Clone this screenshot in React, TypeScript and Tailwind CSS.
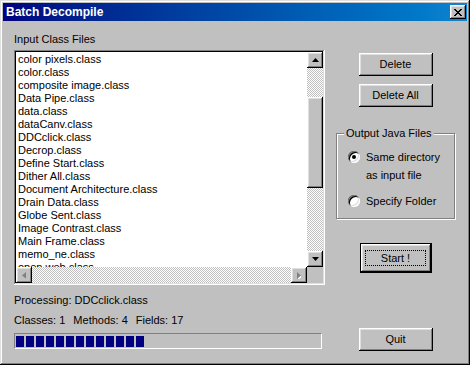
import React from 'react'

const files = [
  'color pixels.class',
  'color.class',
  'composite image.class',
  'Data Pipe.class',
  'data.class',
  'dataCanv.class',
  'DDCclick.class',
  'Decrop.class',
  'Define Start.class',
  'Dither All.class',
  'Document Architecture.class',
  'Drain Data.class',
  'Globe Sent.class',
  'Image Contrast.class',
  'Main Frame.class',
  'memo_ne.class',
  'open web.class',
]

// win98 bevels
const raised = 'shadow-[inset_-1px_-1px_#000,inset_1px_1px_#fff,inset_-2px_-2px_#808080,inset_2px_2px_#dfdfdf]'
const checker = 'bg-[image:conic-gradient(#c0c0c0_25%,#fff_0_50%,#c0c0c0_0_75%,#fff_0)] bg-[length:2px_2px]'

function Arrow({ dir, disabled }: { dir: 'up' | 'down' | 'left' | 'right'; disabled?: boolean }) {
  const fill = disabled ? '#808080' : '#000'
  const pts: Record<string, string> = {
    up: '3.5,0 7,4 0,4',
    down: '0,0 7,0 3.5,4',
    left: '4,0 4,7 0,3.5',
    right: '0,0 0,7 4,3.5',
  }
  const vertical = dir === 'up' || dir === 'down'
  return (
    <div className={`w-[16px] h-[16px] shrink-0 bg-[#c0c0c0] flex items-center justify-center ${raised}`}>
      <svg width={vertical ? 7 : 4} height={vertical ? 4 : 7} viewBox={vertical ? '0 0 7 4' : '0 0 4 7'}>
        {disabled && <polygon points={pts[dir]} fill="#fff" transform="translate(1,1)" />}
        <polygon points={pts[dir]} fill={fill} />
      </svg>
    </div>
  )
}

function Radio({ checked }: { checked?: boolean }) {
  return (
    <div className="w-[12px] h-[12px] shrink-0 rounded-full bg-white flex items-center justify-center shadow-[inset_1px_1px_#808080,inset_-1px_-1px_#fff,inset_2px_2px_#000,inset_-2px_-2px_#dfdfdf]">
      {checked && <div className="w-[4px] h-[4px] rounded-full bg-black" />}
    </div>
  )
}

function Button({ children, className = '' }: { children: React.ReactNode; className?: string }) {
  return (
    <button className={`w-[74px] h-[23px] bg-[#c0c0c0] text-black text-[11px] ${raised} ${className}`}>
      {children}
    </button>
  )
}

export default function App() {
  return (
    <div className="w-[470px] h-[365px] bg-[#c0c0c0] p-[3px] flex flex-col font-['Liberation_Sans',Arial,sans-serif] text-[11px] leading-[13px] text-black shadow-[inset_-1px_-1px_#000,inset_1px_1px_#dfdfdf,inset_-2px_-2px_#808080,inset_2px_2px_#fff]">
      {/* title bar */}
      <div className="h-[18px] shrink-0 flex items-center justify-between pl-[3px] pr-[1px] bg-linear-to-r from-[#000080] to-[#1084d0]">
        <span className="text-white font-bold text-[12px]">Batch Decompile</span>
        <div className={`w-[16px] h-[14px] bg-[#c0c0c0] flex items-center justify-center ${raised}`}>
          <svg width="8" height="7" viewBox="0 0 8 7">
            <path d="M0 0h2v1h1v1h2v-1h1v-1h2v1h-1v1h-1v1h-1v1h1v1h1v1h1v1h-2v-1h-1v-1h-2v1h-1v1h-2v-1h1v-1h1v-1h1v-1h-1v-1h-1v-1h-1z" fill="#000" />
          </svg>
        </div>
      </div>

      <div className="flex-1 flex pl-[11px] pr-[12px] pt-[12px] gap-[11px]">
        {/* left */}
        <div className="w-[311px] flex flex-col">
          <div>Input Class Files</div>
          <div className="mt-[4px] h-[235px] p-[2px] bg-white flex flex-col shadow-[inset_-1px_-1px_#fff,inset_1px_1px_#808080,inset_-2px_-2px_#dfdfdf,inset_2px_2px_#000]">
            <div className="flex flex-1 min-h-0">
              <div className="flex-1 overflow-hidden pl-[2px] pt-[1px]">
                {files.map(f => (
                  <div key={f} className="h-[13px] whitespace-nowrap">{f}</div>
                ))}
              </div>
              <div className="w-[16px] flex flex-col">
                <Arrow dir="up" />
                <div className={`flex-1 ${checker}`}>
                  <div className={`mt-[29px] h-[91px] bg-[#c0c0c0] ${raised}`} />
                </div>
                <Arrow dir="down" />
              </div>
            </div>
            <div className="h-[16px] flex shrink-0">
              <Arrow dir="left" disabled />
              <div className={`flex-1 ${checker}`} />
              <Arrow dir="right" disabled />
              <div className="w-[16px] bg-[#c0c0c0]" />
            </div>
          </div>
          <div className="mt-[9px]">Processing: DDCclick.class</div>
          <div className="mt-[7px] flex gap-[8px]">
            <span>Classes: 1</span>
            <span>Methods: 4</span>
            <span>Fields: 17</span>
          </div>
          <div className="mt-[6px] w-[308px] h-[16px] border border-t-[#808080] border-l-[#808080] border-b-white border-r-white flex items-center gap-[2px] pl-[1px]">
            {Array.from({ length: 13 }).map((_, i) => (
              <div key={i} className="w-[8px] h-[11px] bg-[#000080]" />
            ))}
          </div>
        </div>

        {/* right */}
        <div className="w-[119px] flex flex-col items-center">
          <Button className="mt-[20px]">Delete</Button>
          <Button className="mt-[8px]">Delete All</Button>
          <fieldset className="mt-[20px] w-[119px] border border-[#808080] shadow-[inset_1px_1px_#fff,1px_1px_#fff] pt-[8px] pb-[8px]">
            <legend className="ml-[7px] px-[2px] bg-[#c0c0c0]">Output Java Files</legend>
            <div className="pl-[11px] flex gap-[6px] leading-[18px]">
              <div className="pt-[3px]"><Radio checked /></div>
              <div>Same directory<br />as input file</div>
            </div>
            <div className="pl-[11px] mt-[8px] flex gap-[6px] leading-[18px]">
              <div className="pt-[3px]"><Radio /></div>
              <div>Specify Folder</div>
            </div>
          </fieldset>
          <button className={`mt-[24px] w-[72px] h-[30px] border border-black bg-[#c0c0c0] flex items-center justify-center ${raised}`}>
            <span className="w-[61px] h-[16px] border border-dotted border-black flex items-center justify-center text-[11px]">Start !</span>
          </button>
          <Button className="mt-[55px]">Quit</Button>
        </div>
      </div>
    </div>
  )
}
